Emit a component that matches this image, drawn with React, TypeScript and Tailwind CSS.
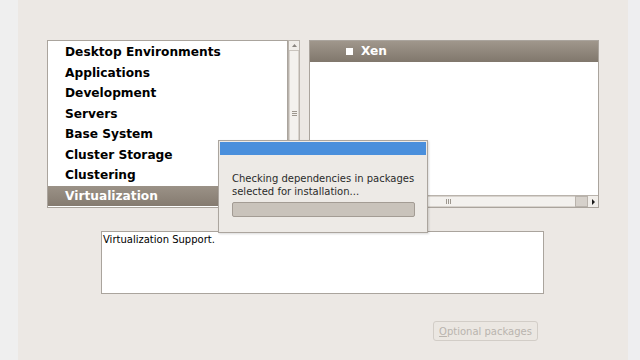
const groups = [
	"Desktop Environments",
	"Applications",
	"Development",
	"Servers",
	"Base System",
	"Cluster Storage",
	"Clustering",
	"Virtualization",
];

function VScrollbar() {
	return (
		<div className="flex w-[12px] flex-col border border-[#b9b3ac] bg-[#e6e2dd]">
			<div className="flex h-[10px] items-center justify-center border-b border-[#c9c4be] bg-[#f1eeea]">
				<svg width="5" height="3" viewBox="0 0 5 3">
					<path d="M0 3 L2.5 0 L5 3 Z" fill="#8a8580" />
				</svg>
			</div>
			<div className="flex flex-1 flex-col items-center justify-center border-x border-[#d8d3cd] bg-[#f3f1ee] pb-[32px]">
				<div className="flex flex-col gap-[1px]">
					<div className="h-[1px] w-[5px] bg-[#9d978f]" />
					<div className="h-[1px] w-[5px] bg-[#9d978f]" />
					<div className="h-[1px] w-[5px] bg-[#9d978f]" />
				</div>
			</div>
		</div>
	);
}

function HScrollbar() {
	return (
		<div className="flex h-[12px] border-t border-[#b9b3ac] bg-[#e6e2dd]">
			<div className="flex flex-1 items-center border-y border-[#d8d3cd] bg-[#f3f1ee] pl-[136px]">
				<div className="flex gap-[1px]">
					<div className="h-[5px] w-[1px] bg-[#9d978f]" />
					<div className="h-[5px] w-[1px] bg-[#9d978f]" />
					<div className="h-[5px] w-[1px] bg-[#9d978f]" />
				</div>
			</div>
			<div className="w-[13px] border border-[#b9b3ac] bg-[#d6d1cb]" />
			<div className="flex w-[10px] items-center justify-center bg-[#f1eeea]">
				<svg width="3" height="6" viewBox="0 0 3 6">
					<path d="M0 0 L3 3 L0 6 Z" fill="#1a1a1a" />
				</svg>
			</div>
		</div>
	);
}

export default function App() {
	return (
		<div
			className="relative flex h-[360px] w-[640px] overflow-hidden bg-[#efefef]"
			style={{ fontFamily: '"DejaVu Sans", sans-serif' }}
		>
			<div className="w-[18px]" />
			<div className="flex w-[610px] flex-col bg-[#ece8e4] pt-[40px]">
				<div className="ml-[29px] flex h-[168px]">
					<div className="flex w-[241px] flex-col border border-[#aaa49d] bg-white pl-[17px] pt-[1px]">
						{groups.map((g) => (
							<div
								key={g}
								className={
									g === "Virtualization"
										? "-ml-[17px] flex h-[20.5px] items-center bg-gradient-to-b from-[#9b9287] to-[#857b70] pl-[17px] text-[12.2px] font-bold text-white"
										: "flex h-[20.5px] items-center text-[12.2px] font-bold text-black"
								}
							>
								{g}
							</div>
						))}
					</div>
					<VScrollbar />
					<div className="ml-[9px] flex w-[290px] flex-col border border-[#aaa49d] bg-white">
						<div className="flex h-[21px] items-center bg-gradient-to-b from-[#a0978c] to-[#80776c] pl-[36px] text-[12.2px] font-bold text-white">
							<div className="mr-[8px] h-[7px] w-[7px] bg-white" />
							Xen
						</div>
						<div className="flex-1" />
						<HScrollbar />
					</div>
				</div>
				<div className="ml-[83px] mt-[23px] h-[63px] w-[443px] border border-[#aaa49d] bg-white px-[1px] pt-[1px] text-[10px] leading-[13px] text-black">
					Virtualization Support.
				</div>
				<div className="ml-[415px] mt-[27px] flex h-[20px] w-[105px] items-center justify-center rounded-[3px] border border-[#d2cdc7] bg-[#ebe7e2] text-[10px] text-[#b9b4ae]">
					<span>
						<span className="underline">O</span>ptional packages
					</span>
				</div>
			</div>
			<div className="w-[12px] bg-[#eeeef0]" />

			<div className="absolute left-[218px] top-[140px] flex h-[93px] w-[210px] flex-col border border-[#aba59e] bg-[#edeae6] p-[1px] shadow-[1px_1px_2px_rgba(0,0,0,0.15)]">
				<div className="h-[13px] bg-[#4a8fdc]" />
				<div className="whitespace-nowrap px-[12px] pt-[17px] text-[10px] leading-[13px] text-[#2a2a2a]">
					<div>Checking dependencies in packages</div>
					<div>selected for installation...</div>
					<div className="mt-[4px] h-[15px] w-[183px] rounded-[2px] border border-[#a39c94] bg-[#c9c3bb]" />
				</div>
			</div>
		</div>
	);
}
